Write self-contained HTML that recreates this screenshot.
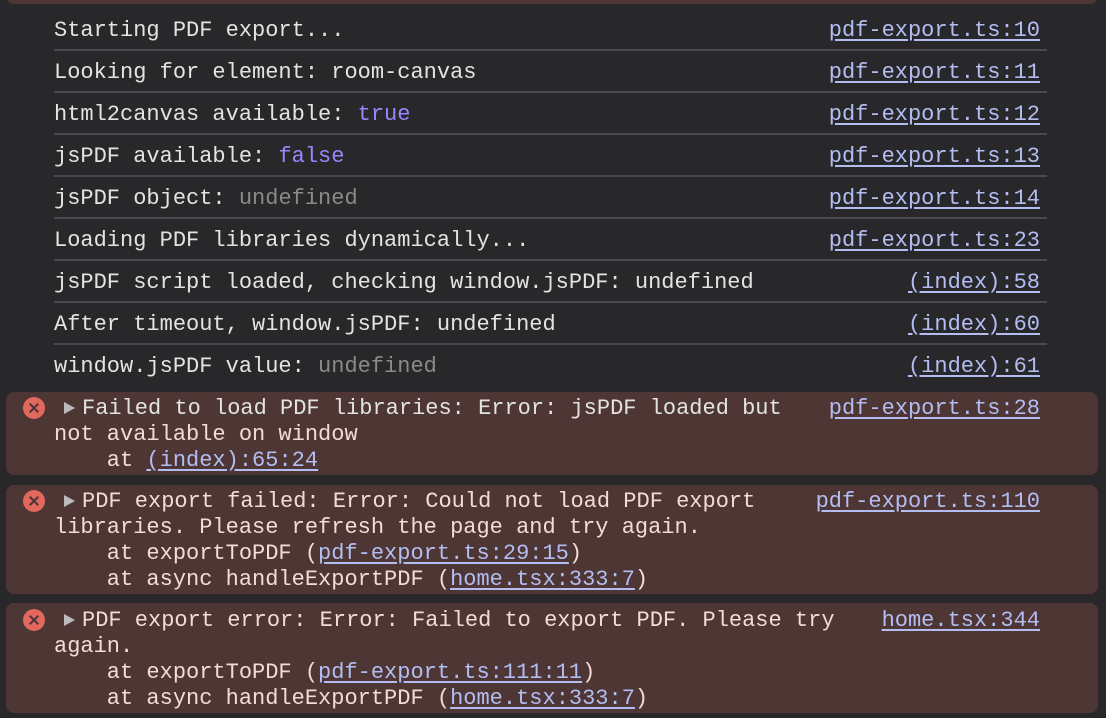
<!DOCTYPE html>
<html><head><meta charset="utf-8"><style>
body{margin:0;width:1106px;height:718px;background:#28282a;overflow:hidden;position:relative;font-family:"Liberation Mono","DejaVu Sans Mono",monospace;font-size:22px;color:#e3e3e3}
.row{position:absolute;left:54px;width:993px;height:42px;border-bottom:2px solid #4a4a4c;box-sizing:border-box}
.t{position:absolute;white-space:pre;line-height:26px}
.lk{color:#b4bdf2;text-decoration:underline;text-underline-offset:3px}
.b{color:#9a85ff}.u{color:#8a8a8a}
.err{position:absolute;left:6px;width:1092px;background:#4d3634;border-radius:8px;color:#f2dcd8}
.ic{position:absolute;left:23px;width:22px;height:22px;border-radius:50%;background:#e2675f}
.ic:before,.ic:after{content:"";position:absolute;left:10px;top:5px;width:2px;height:12px;background:#4d3634;transform:rotate(45deg)}
.ic:after{transform:rotate(-45deg)}
.tri{position:absolute;left:64px;width:0;height:0;border-left:11px solid #bbb;border-top:6px solid transparent;border-bottom:6px solid transparent}
</style></head><body>
<div class="err" style="top:-20px;height:24px"></div>
<div class="row" style="top:9px"></div>
<div class="row" style="top:51px"></div>
<div class="row" style="top:93px"></div>
<div class="row" style="top:135px"></div>
<div class="row" style="top:177px"></div>
<div class="row" style="top:219px"></div>
<div class="row" style="top:261px"></div>
<div class="row" style="top:303px"></div>
<div class="row" style="top:345px;border:none"></div>

<div class="t" style="left:54px;top:18px">Starting PDF export...</div><div class="t lk" style="right:66px;top:18px">pdf-export.ts:10</div>
<div class="t" style="left:54px;top:60px">Looking for element: room-canvas</div><div class="t lk" style="right:66px;top:60px">pdf-export.ts:11</div>
<div class="t" style="left:54px;top:102px">html2canvas available: <span class="b">true</span></div><div class="t lk" style="right:66px;top:102px">pdf-export.ts:12</div>
<div class="t" style="left:54px;top:144px">jsPDF available: <span class="b">false</span></div><div class="t lk" style="right:66px;top:144px">pdf-export.ts:13</div>
<div class="t" style="left:54px;top:186px">jsPDF object: <span class="u">undefined</span></div><div class="t lk" style="right:66px;top:186px">pdf-export.ts:14</div>
<div class="t" style="left:54px;top:228px">Loading PDF libraries dynamically...</div><div class="t lk" style="right:66px;top:228px">pdf-export.ts:23</div>
<div class="t" style="left:54px;top:270px">jsPDF script loaded, checking window.jsPDF: undefined</div><div class="t lk" style="right:66px;top:270px">(index):58</div>
<div class="t" style="left:54px;top:312px">After timeout, window.jsPDF: undefined</div><div class="t lk" style="right:66px;top:312px">(index):60</div>
<div class="t" style="left:54px;top:354px">window.jsPDF value: <span class="u">undefined</span></div><div class="t lk" style="right:66px;top:354px">(index):61</div>

<div class="err" style="top:392px;height:83px"></div>
<div class="ic" style="top:397px"></div><div class="tri" style="top:402px"></div>
<div class="t" style="left:82px;top:396px">Failed to load PDF libraries: Error: jsPDF loaded but</div>
<div class="t" style="left:54px;top:422px;color:#f2dcd8">not available on window</div>
<div class="t" style="left:54px;top:448px;color:#f2dcd8">    at <span class="lk">(index):65:24</span></div>
<div class="t lk" style="right:66px;top:396px">pdf-export.ts:28</div>

<div class="err" style="top:485px;height:109px"></div>
<div class="ic" style="top:490px"></div><div class="tri" style="top:495px"></div>
<div class="t" style="left:82px;top:489px;color:#f2dcd8">PDF export failed: Error: Could not load PDF export</div>
<div class="t" style="left:54px;top:515px;color:#f2dcd8">libraries. Please refresh the page and try again.</div>
<div class="t" style="left:54px;top:541px;color:#f2dcd8">    at exportToPDF (<span class="lk">pdf-export.ts:29:15</span>)</div>
<div class="t" style="left:54px;top:567px;color:#f2dcd8">    at async handleExportPDF (<span class="lk">home.tsx:333:7</span>)</div>
<div class="t lk" style="right:66px;top:489px">pdf-export.ts:110</div>

<div class="err" style="top:603px;height:110px"></div>
<div class="ic" style="top:609px"></div><div class="tri" style="top:614px"></div>
<div class="t" style="left:82px;top:608px;color:#f2dcd8">PDF export error: Error: Failed to export PDF. Please try</div>
<div class="t" style="left:54px;top:634px;color:#f2dcd8">again.</div>
<div class="t" style="left:54px;top:660px;color:#f2dcd8">    at exportToPDF (<span class="lk">pdf-export.ts:111:11</span>)</div>
<div class="t" style="left:54px;top:686px;color:#f2dcd8">    at async handleExportPDF (<span class="lk">home.tsx:333:7</span>)</div>
<div class="t lk" style="right:66px;top:608px">home.tsx:344</div>
</body></html>
